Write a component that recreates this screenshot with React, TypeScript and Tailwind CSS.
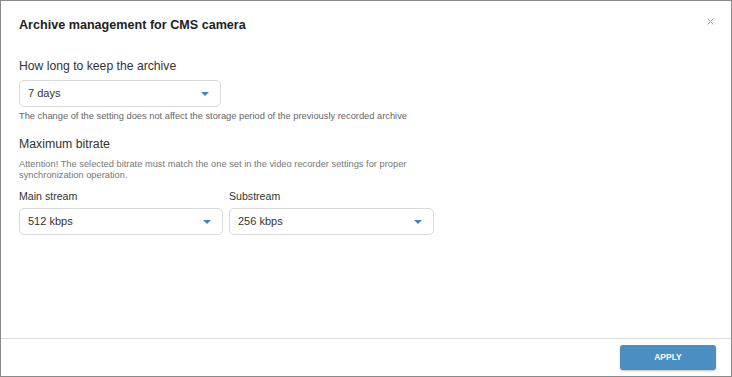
function Caret() {
  return (
    <svg width="8" height="4" viewBox="0 0 8 4" className="shrink-0">
      <path d="M0 0 H8 L4 4 Z" fill="#3d87c0" />
    </svg>
  );
}

function Select({ value, className }: { value: string; className: string }) {
  return (
    <div
      className={`flex h-[27px] items-center justify-between rounded-[5px] border border-[#d9d9d9] bg-white pl-[8px] pr-[11px] text-[11px] text-[#333] ${className}`}
    >
      <span>{value}</span>
      <Caret />
    </div>
  );
}

export default function App() {
  return (
    <div
      className="flex h-[377px] w-[732px] flex-col border border-[#8a8a8a] bg-white text-[#333]"
      style={{ fontFamily: '"Liberation Sans", Arial, sans-serif' }}
    >
      {/* Header */}
      <div className="flex items-center justify-between pl-[18px] pr-[17px] pt-[16px]">
        <h1 className="text-[12.6px] font-bold leading-[16px] text-[#222]">Archive management for CMS camera</h1>
        <svg width="7" height="7" viewBox="0 0 7 7" className="-mt-[8px]">
          <path d="M0.5 0.5 L6.5 6.5 M6.5 0.5 L0.5 6.5" stroke="#a0a0a0" strokeWidth="1" />
        </svg>
      </div>

      {/* Body */}
      <div className="flex flex-1 flex-col px-[18px] pt-[25px]">
        <div className="text-[12.2px] leading-[16px]">How long to keep the archive</div>
        <Select value="7 days" className="mt-[6px] w-[202px]" />
        <p className="mt-[2px] text-[9.3px] leading-[14px] text-[#666]">
          The change of the setting does not affect the storage period of the previously recorded archive
        </p>

        <div className="mt-[13px] text-[12.3px] leading-[16px]">Maximum bitrate</div>
        <p className="mt-[7px] w-[400px] text-[9.3px] leading-[11px] text-[#777]">
          Attention! The selected bitrate must match the one set in the video recorder settings for proper
          synchronization operation.
        </p>

        <div className="mt-[8px] flex gap-[6px]">
          <div className="flex flex-col">
            <span className="text-[10.6px] leading-[14px]">Main stream</span>
            <Select value="512 kbps" className="mt-[5px] w-[204px]" />
          </div>
          <div className="flex flex-col">
            <span className="text-[10.6px] leading-[14px]">Substream</span>
            <Select value="256 kbps" className="mt-[5px] w-[205px]" />
          </div>
        </div>
      </div>

      {/* Footer */}
      <div className="flex h-[38px] items-center justify-end border-t border-[#dcdcdc] pr-[15px]">
        <button className="h-[25px] w-[96px] rounded-[3px] bg-[#4a8ec2] text-[8.5px] font-bold text-white shadow-[0_1px_2px_rgba(0,0,0,0.25)]">
          APPLY
        </button>
      </div>
    </div>
  );
}
